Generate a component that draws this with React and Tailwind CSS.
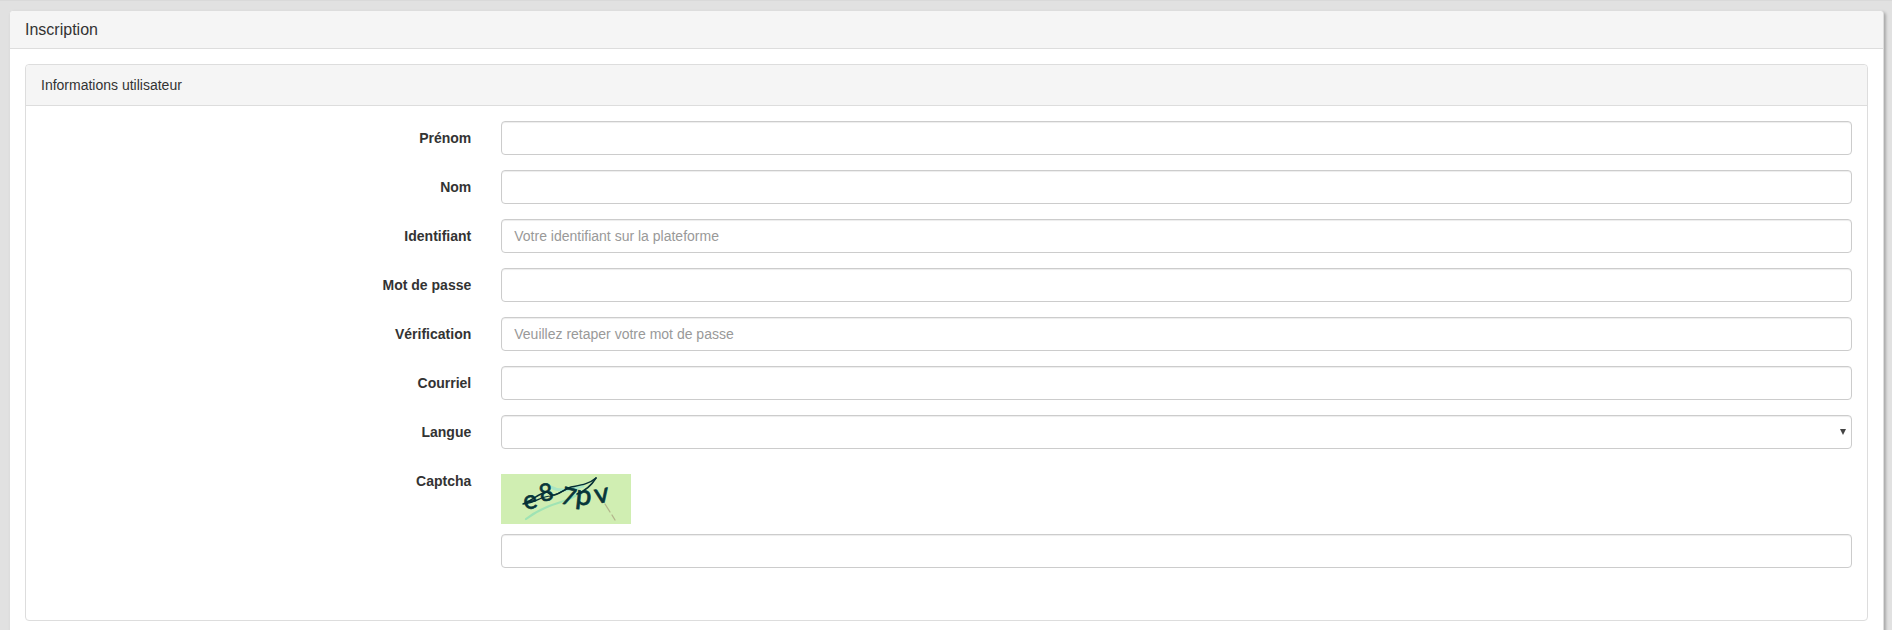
import React from "react";

const control =
  "block h-[34px] w-full rounded border border-[#ccc] bg-white px-3 py-1.5 text-sm text-[#555] shadow-[inset_0_1px_1px_rgba(0,0,0,0.075)] outline-none placeholder:text-[#999] focus:border-[#66afe9]";

function Row({ id, label, children }) {
  return (
    <div className="grid grid-cols-4">
      <label htmlFor={id} className="px-[15px] pt-[7px] text-right text-sm font-bold">
        {label}
      </label>
      <div className="col-span-3 px-[15px]">{children}</div>
    </div>
  );
}

function Captcha() {
  return (
    <svg width="130" height="50" viewBox="0 0 130 50" role="img" aria-label="Captcha" className="block bg-[#d0eeb2]">
      <g fill="none" strokeLinecap="round">
        <path d="M25 45 C34 38 46 32 60 28 S74 22 80 18" stroke="#9fe3b4" strokeWidth="2.2" />
        <path d="M104 30 L109 38 M111 41 L114 46" stroke="#b3b58c" strokeWidth="1.3" />
        <path d="M50 13 C60 19 70 15 82 12" stroke="#a9e6c4" strokeWidth="3" />
      </g>
      <g fill="#07363a" stroke="#07363a" strokeWidth="0.7" fontFamily="Lato, 'Liberation Sans', sans-serif" fontSize="26">
        <text transform="translate(24 36) rotate(-12)">e</text>
        <text transform="translate(40 28) rotate(-12)" fontSize="24">8</text>
        <text transform="translate(59 29) rotate(14)" fontSize="24">7</text>
        <text transform="translate(74 30) rotate(6)" fontSize="28">p</text>
        <text transform="translate(95 30) rotate(-10)" fontSize="28">v</text>
      </g>
      <g fill="none" stroke="#062f36" strokeLinecap="round">
        <path d="M22 30 C32 26 38 19 46 18 C54 26 60 16 70 13 C80 11 88 10 95 4" strokeWidth="1.5" />
        <path d="M24 30 C36 28 40 22 50 22 C58 20 62 17 68 14" strokeWidth="1.2" />
        <path d="M76 20 C84 17 90 12 95 4" strokeWidth="1.6" />
      </g>
    </svg>
  );
}

export default function App() {
  return (
    <div className="min-h-screen overflow-hidden border-t border-[#d9d9d9] bg-[#e1e1e1] pt-[9px] pr-2 pl-[9px] font-['Liberation_Sans',Arial,sans-serif] text-[#333]">
      <main className="min-h-[640px] rounded border border-[#ddd] bg-white shadow-[2px_2px_3px_rgba(0,0,0,0.25)]">
        <header className="rounded-t border-b border-[#ddd] bg-[#f5f5f5] px-[15px] py-[10px]">
          <h1 className="text-base leading-[17px]">Inscription</h1>
        </header>
        <form className="p-[15px]">
          <section className="rounded border border-[#ddd]">
            <h2 className="rounded-t border-b border-[#ddd] bg-[#f5f5f5] px-[15px] py-[10px] text-sm">
              Informations utilisateur
            </h2>
            <div className="flex flex-col gap-[15px] pt-[15px] pb-[52px]">
              <Row id="prenom" label="Prénom">
                <input id="prenom" type="text" className={control} />
              </Row>
              <Row id="nom" label="Nom">
                <input id="nom" type="text" className={control} />
              </Row>
              <Row id="identifiant" label="Identifiant">
                <input id="identifiant" type="text" placeholder="Votre identifiant sur la plateforme" className={control} />
              </Row>
              <Row id="motdepasse" label="Mot de passe">
                <input id="motdepasse" type="password" className={control} />
              </Row>
              <Row id="verification" label="Vérification">
                <input id="verification" type="password" placeholder="Veuillez retaper votre mot de passe" className={control} />
              </Row>
              <Row id="courriel" label="Courriel">
                <input id="courriel" type="email" className={control} />
              </Row>
              <Row id="langue" label="Langue">
                <div className="relative">
                  <select id="langue" defaultValue="" className={control + " appearance-none"}>
                    <option value=""></option>
                  </select>
                  <svg width="6" height="6" viewBox="0 0 6 6" className="pointer-events-none absolute top-3.5 right-1.5" aria-hidden="true">
                    <path d="M0 0H6L3 6Z" fill="#444" />
                  </svg>
                </div>
              </Row>
              <Row id="captcha" label="Captcha">
                <div className="flex flex-col gap-[10px] pt-[10px]">
                  <Captcha />
                  <input id="captcha" type="text" className={control} />
                </div>
              </Row>
            </div>
          </section>
        </form>
      </main>
    </div>
  );
}
